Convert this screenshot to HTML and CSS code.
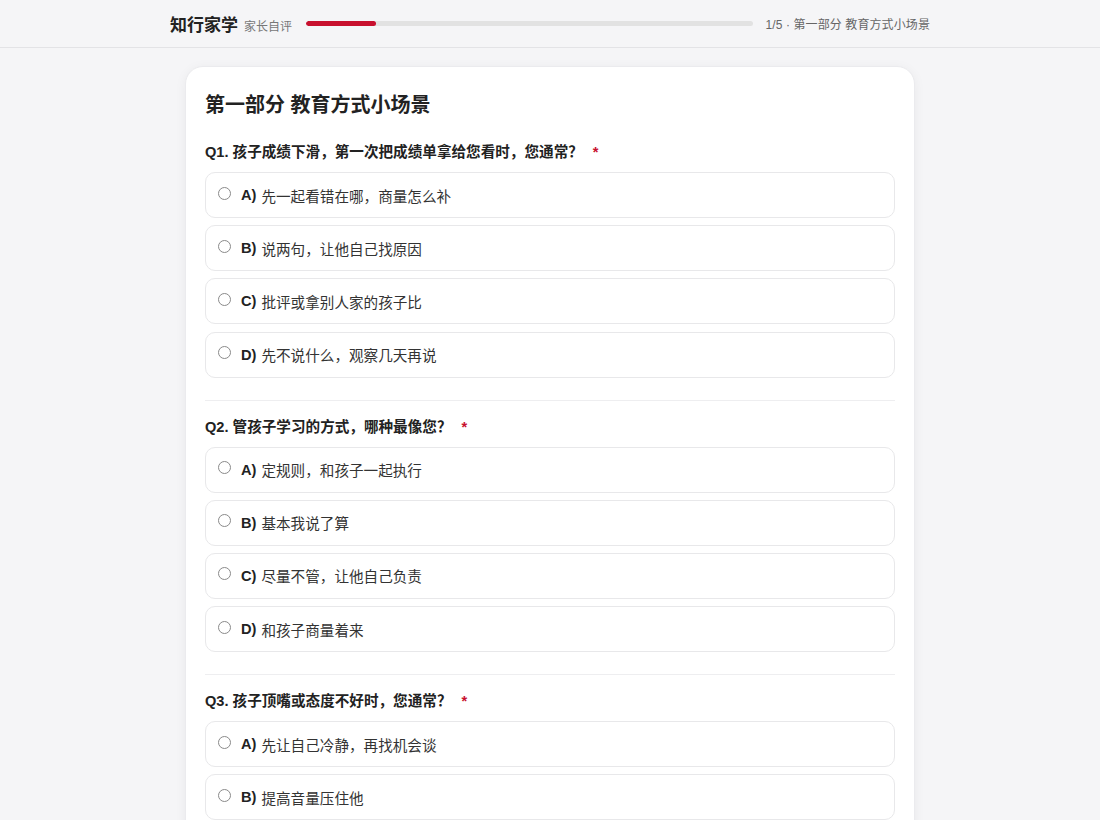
FILE: index.html
```html
<!DOCTYPE html>
<html lang="zh-CN">
<head>
<meta charset="utf-8">
<title>知行家学 家长自评</title>
<link rel="stylesheet" href="styles.css">
</head>
<body>
<header class="topbar">
  <div class="topbar-inner">
    <div class="brand"><span class="brand-name">知行家学</span><span class="brand-sub">家长自评</span></div>
    <div class="progress"><div class="progress-fill" style="width:15.6%"></div></div>
    <div class="step">1/5 · 第一部分 教育方式小场景</div>
  </div>
</header>
<main class="card">
  <h1 class="part-title">第一部分 教育方式小场景</h1>

  <section class="question">
    <div class="q-title">Q1. 孩子成绩下滑，第一次把成绩单拿给您看时，您通常？<span class="req">*</span></div>
    <div class="options">
      <label class="option"><span class="radio"></span><b>A)</b>先一起看错在哪，商量怎么补</label>
      <label class="option"><span class="radio"></span><b>B)</b>说两句，让他自己找原因</label>
      <label class="option"><span class="radio"></span><b>C)</b>批评或拿别人家的孩子比</label>
      <label class="option"><span class="radio"></span><b>D)</b>先不说什么，观察几天再说</label>
    </div>
  </section>
  <hr class="sep">
  <section class="question">
    <div class="q-title">Q2. 管孩子学习的方式，哪种最像您？<span class="req">*</span></div>
    <div class="options">
      <label class="option"><span class="radio"></span><b>A)</b>定规则，和孩子一起执行</label>
      <label class="option"><span class="radio"></span><b>B)</b>基本我说了算</label>
      <label class="option"><span class="radio"></span><b>C)</b>尽量不管，让他自己负责</label>
      <label class="option"><span class="radio"></span><b>D)</b>和孩子商量着来</label>
    </div>
  </section>
  <hr class="sep">
  <section class="question">
    <div class="q-title">Q3. 孩子顶嘴或态度不好时，您通常？<span class="req">*</span></div>
    <div class="options">
      <label class="option"><span class="radio"></span><b>A)</b>先让自己冷静，再找机会谈</label>
      <label class="option"><span class="radio"></span><b>B)</b>提高音量压住他</label>
      <label class="option"><span class="radio"></span><b>C)</b>不理他，冷处理</label>
      <label class="option"><span class="radio"></span><b>D)</b>当场讲道理</label>
    </div>
  </section>
</main>
</body>
</html>
```

FILE: styles.css
```css
* { box-sizing: border-box; }
html, body { margin: 0; padding: 0; }
body {
  background: #f5f5f7;
  font-family: "Liberation Sans", "Noto Sans CJK SC", sans-serif;
  color: #222;
}
.topbar {
  height: 48px;
  border-bottom: 1px solid #e3e3e6;
  background: #f5f5f7;
}
.topbar-inner {
  width: 760px;
  margin: 0 auto;
  height: 46px;
  display: flex;
  align-items: center;
}
.brand { display: flex; align-items: baseline; white-space: nowrap; }
.brand-name { font-size: 17px; font-weight: 700; color: #222; }
.brand-sub { font-size: 12px; color: #777; margin-left: 6px; }
.progress {
  flex: 1;
  height: 5px;
  background: #e2e2e2;
  border-radius: 3px;
  margin: 1px 13px 0 14px;
  overflow: hidden;
}
.progress-fill { height: 100%; background: #c8102e; border-radius: 3px; }
.step { font-size: 12px; color: #666; white-space: nowrap; margin-top: 1px; letter-spacing: 0.1px; }

.card {
  width: 730px;
  margin: 18px auto 0;
  background: #fff;
  border: 1px solid #ebebee;
  border-radius: 18px;
  padding: 23px 19px 20px;
  box-shadow: 0 2px 12px rgba(0,0,0,0.05);
}
.part-title {
  margin: 0 0 22px;
  font-size: 20px;
  line-height: 30px;
  font-weight: 700;
  color: #222;
}
.q-title {
  font-size: 14.6px;
  line-height: 20px;
  font-weight: 700;
  color: #222;
  margin-bottom: 10px;
}
.req { color: #c8102e; margin-left: 10px; }
.options { display: flex; flex-direction: column; gap: 7.2px; }
.option {
  display: flex;
  align-items: center;
  height: 46px;
  padding: 0 12px;
  border: 1px solid #e8e8ea;
  border-radius: 10px;
  font-size: 14.6px;
  color: #333;
}
.option b { font-weight: 700; color: #222; margin-right: 5px; }
.radio {
  width: 13px;
  height: 13px;
  border: 1px solid #8a8a8a;
  border-radius: 50%;
  background: #fff;
  margin-right: 10px;
  position: relative;
  top: -2px;
  flex: none;
}
.sep {
  border: 0;
  border-top: 1px solid #eeeef0;
  margin: 22px 0 16px;
}
```
